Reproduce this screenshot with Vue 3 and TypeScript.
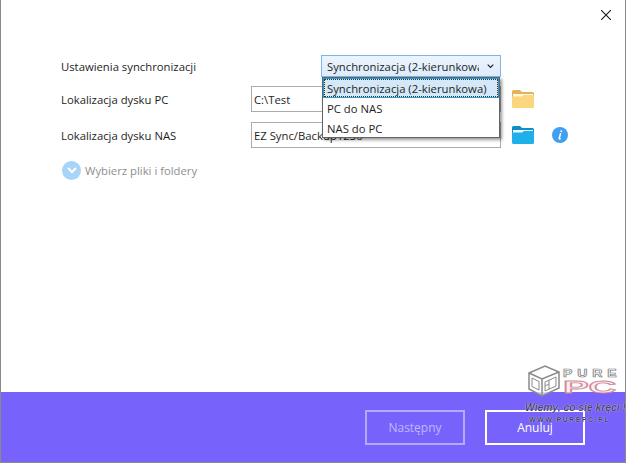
<script setup lang="ts">
const options: string[] = ['Synchronizacja (2-kierunkowa)', 'PC do NAS', 'NAS do PC']
</script>

<template>
  <div class="window">
    <main class="content">
      <div class="close-row">
        <svg class="close" width="10" height="10" viewBox="0 0 10 10">
          <path d="M0 0L10 10M10 0L0 10" stroke="#1a1a1a" stroke-width="1.1" fill="none" />
        </svg>
      </div>
      <div class="row row-sync">
        <span class="label">Ustawienia synchronizacji</span>
        <div class="select-wrap">
          <div class="select">
            <span class="select-text">Synchronizacja (2-kierunkowa)</span>
            <svg class="chev" width="7" height="5" viewBox="0 0 7 5">
              <path d="M0.7 0.7L3.5 3.5L6.3 0.7" stroke="#222" stroke-width="1.2" fill="none" />
            </svg>
          </div>
          <ul class="dropdown">
            <li v-for="(o, i) in options" :key="o" :class="{ active: i === 0 }"><span>{{ o }}</span></li>
          </ul>
        </div>
      </div>
      <div class="row row-path">
        <span class="label">Lokalizacja dysku PC</span>
        <div class="input">C:\Test</div>
        <svg class="folder" width="22" height="18" viewBox="0 0 22 18">
          <path d="M0 1.500Q0 0 1.500 0H8L10 2H20.500Q22 2 22 3.500V7H0Z" fill="#e3b457" />
          <rect x="1" y="4" width="20" height="3" fill="#fdf6e3" />
          <path d="M0 6.500L10 6.500L12 5H22V16.500Q22 18 20.500 18H1.500Q0 18 0 16.500Z" fill="#fbd67f" />
        </svg>
      </div>
      <div class="row row-path row-nas">
        <span class="label">Lokalizacja dysku NAS</span>
        <div class="input">EZ Sync/Backup1230</div>
        <svg class="folder" width="22" height="18" viewBox="0 0 22 18">
          <path d="M0 1.500Q0 0 1.500 0H8L10 2H20.500Q22 2 22 3.500V7H0Z" fill="#0f8fca" />
          <rect x="1" y="4" width="20" height="3" fill="#f0fafe" />
          <path d="M0 6.500L10 6.500L12 5H22V16.500Q22 18 20.500 18H1.500Q0 18 0 16.500Z" fill="#1fb0ea" />
        </svg>
        <svg class="info" width="16" height="16" viewBox="0 0 16 16">
          <circle cx="8" cy="8" r="8" fill="#3f9ff0" />
          <circle cx="9.300" cy="4.300" r="1" fill="#fff" />
          <path d="M8.500 6.800L7.200 11.200Q7 12.200 8.200 11.800" stroke="#fff" stroke-width="1.500" fill="none" stroke-linecap="round" />
        </svg>
      </div>
      <div class="expand">
        <span class="expand-dot">
          <svg width="10" height="7" viewBox="0 0 10 7">
            <path d="M1 1L5 5L9 1" stroke="#fff" stroke-width="2" fill="none" />
          </svg>
        </span>
        <span class="expand-text">Wybierz pliki i foldery</span>
      </div>
    </main>
    <footer class="footer">
      <button class="btn disabled">Następny</button>
      <button class="btn">Anuluj</button>
    </footer>
    <div class="watermark">
      <div class="wm-logo">
        <svg width="32" height="32" viewBox="0 0 32 32">
          <path d="M1 8L17 1L31 7V23L14 31L1 24Z" fill="#fff" fill-opacity=".7" stroke="#8a8a8a" stroke-width="1.500" />
          <path d="M1 8L14 14L31 7M14 14V31" fill="none" stroke="#8a8a8a" stroke-width="1.500" />
          <path d="M4 13L11 16.500V25L4 21.500Z" fill="none" stroke="#8a8a8a" />
          <path d="M17 17L28 12V21L17 26Z" fill="none" stroke="#8a8a8a" />
          <path d="M21 15V24M17 21L21 19" fill="none" stroke="#8a8a8a" />
        </svg>
        <div class="wm-name">
          <span class="wm-pure">PURE</span>
          <span class="wm-pc">PC</span>
        </div>
      </div>
      <div class="wm-slogan">Wiemy, co się kręci !</div>
      <div class="wm-url">WWW.PUREPC.PL</div>
    </div>
  </div>
</template>

<style>
html, body { margin: 0; background: #fff; }
</style>

<style scoped>
.window {
  position: relative;
  width: 626px;
  height: 463px;
  box-sizing: border-box;
  display: flex;
  flex-direction: column;
  overflow: hidden;
  border-left: 1px solid #8a8a8a;
  border-right: 1px solid #8a8a8a;
  border-bottom: 1px solid #8a8a8a;
  font-family: "Open Sans", "Noto Sans", sans-serif;
  font-size: 11.3px;
  color: #1e1e1e;
}
.content {
  height: 392px;
  flex: none;
  box-sizing: border-box;
  padding: 0 0 0 60px;
  background: #fff;
}
.close-row {
  height: 55px;
  box-sizing: border-box;
  padding: 10px 14px 0 0;
  display: flex;
  justify-content: flex-end;
}
.row { display: flex; align-items: center; }
.row-sync { height: 22px; }
.row-sync .label { width: 260px; }
.label { width: 190px; flex: none; }
.select-wrap { position: relative; width: 180px; height: 22px; }
.select {
  height: 22px;
  box-sizing: border-box;
  border: 1px solid #7eb4ea;
  background: linear-gradient(#ecf4fc, #dcecfc);
  display: flex;
  align-items: center;
  padding: 0 6px 0 5px;
  justify-content: space-between;
}
.select-text { width: 152px; overflow: hidden; white-space: nowrap; }
.dropdown {
  position: absolute;
  top: 22px;
  left: 1px;
  width: 178px;
  height: 61px;
  box-sizing: border-box;
  margin: 0;
  padding: 0;
  list-style: none;
  background: #fff;
  border: 1px solid #646464;
  box-shadow: 2px 2px 3px rgba(0, 0, 0, .4);
  z-index: 2;
}
.dropdown li {
  height: 20px;
  display: flex;
  align-items: center;
  padding-left: 4px;
  box-sizing: border-box;
}
.dropdown li.active {
  background: #d4e8f8;
  border: 1px solid #2a9ad0;
  padding-left: 3px;
  outline: 1px dotted #333;
  outline-offset: -2px;
}
.row-path { margin-top: 9px; height: 26px; }
.row-nas { margin-top: 10px; }
.input {
  width: 250px;
  height: 26px;
  box-sizing: border-box;
  border: 1px solid #ababab;
  display: flex;
  align-items: center;
  padding-left: 2px;
  background: #fff;
}
.folder { margin-left: 11px; flex: none; }
.info { margin-left: 18px; flex: none; }
.expand {
  margin-top: 12px;
  display: flex;
  align-items: center;
  gap: 4px;
  height: 20px;
}
.expand-dot {
  width: 19px;
  height: 19px;
  border-radius: 50%;
  background: #a8d4f7;
  display: flex;
  align-items: center;
  justify-content: center;
  margin-left: 1px;
}
.expand-text { color: #8e8e8e; }
.footer {
  flex: 1;
  background: #7763fb;
  display: flex;
  justify-content: flex-end;
  gap: 20px;
  padding: 18px 40px 0 0;
}
.btn {
  width: 100px;
  height: 35px;
  box-sizing: border-box;
  background: transparent;
  border: 2px solid #fff;
  color: #fff;
  font: inherit;
  font-size: 12px;
  padding: 0;
}
.btn.disabled {
  border-color: rgba(255, 255, 255, .45);
  color: rgba(255, 255, 255, .55);
}
.watermark {
  position: absolute;
  left: 524px;
  top: 365px;
  width: 100px;
  pointer-events: none;
}
.wm-logo { display: flex; align-items: flex-start; margin-left: 3px; height: 32px; }
.wm-name {
  display: flex;
  flex-direction: column;
  margin: 4px 0 0 3px;
  font-family: "Liberation Sans", sans-serif;
  font-weight: 700;
}
.wm-pure {
  color: #fff;
  -webkit-text-stroke: 0.6px #777;
  font-size: 10px;
  line-height: 10px;
  letter-spacing: 3.500px;
  transform: scaleX(1.400);
  transform-origin: left;
}
.wm-pc {
  color: #fbeef0;
  -webkit-text-stroke: 0.8px #d08a98;
  font-size: 16px;
  line-height: 14px;
  margin-top: 2px;
  transform: scaleX(2.400);
  transform-origin: left;
}
.wm-slogan {
  margin-top: 6px;
  font-family: "Liberation Sans", sans-serif;
  font-style: italic;
  font-weight: 700;
  font-size: 10.300px;
  line-height: 10px;
  white-space: nowrap;
  color: #4a4470;
  text-shadow: 0 0 1px #fff;
}
.wm-url {
  margin: 3px 0 0 4px;
  font-family: "Liberation Sans", sans-serif;
  font-weight: 700;
  font-size: 7px;
  line-height: 7px;
  letter-spacing: 1.500px;
  white-space: nowrap;
  color: #3d3a6a;
  text-shadow: 0 0 1px #fff;
}
</style>
